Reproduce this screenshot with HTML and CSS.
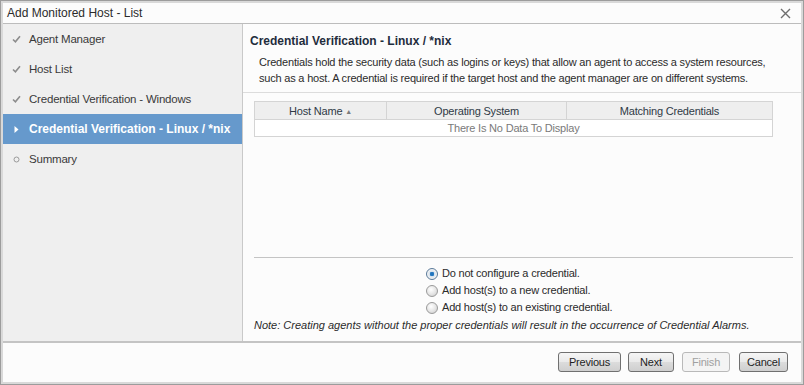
FILE: index.html
```html
<!DOCTYPE html>
<html>
<head>
  <title>Add Monitored Host - List</title>
  <link rel="stylesheet" href="styles.css">
</head>
<body>
  <div class="dialog">
    <div class="title-bar">
      <span class="title">Add Monitored Host - List</span>
      <svg class="close" width="11" height="11" viewBox="0 0 11 11">
        <path d="M1 1 L10 10 M10 1 L1 10" stroke="#6e6e6e" stroke-width="1.4" fill="none"/>
      </svg>
    </div>

    <div class="main">
      <div class="steps">
        <div class="step done">
          <svg class="step-icon" width="9" height="8" viewBox="0 0 9 8"><path d="M1 4.5 L3.4 6.8 L8 1.2" stroke="#8c8c8c" stroke-width="1.6" fill="none"/></svg>
          <span>Agent Manager</span>
        </div>
        <div class="step done">
          <svg class="step-icon" width="9" height="8" viewBox="0 0 9 8"><path d="M1 4.5 L3.4 6.8 L8 1.2" stroke="#8c8c8c" stroke-width="1.6" fill="none"/></svg>
          <span>Host List</span>
        </div>
        <div class="step done">
          <svg class="step-icon" width="9" height="8" viewBox="0 0 9 8"><path d="M1 4.5 L3.4 6.8 L8 1.2" stroke="#8c8c8c" stroke-width="1.6" fill="none"/></svg>
          <span>Credential Verification - Windows</span>
        </div>
        <div class="step active">
          <svg class="step-icon" width="9" height="9" viewBox="0 0 9 9"><path d="M2.5 1 L6.5 4.5 L2.5 8 Z" fill="#ffffff"/></svg>
          <span>Credential Verification - Linux / *nix</span>
        </div>
        <div class="step">
          <svg class="step-icon" width="9" height="9" viewBox="0 0 9 9"><circle cx="4.5" cy="4.5" r="2.5" stroke="#9a9a9a" stroke-width="1" fill="none"/></svg>
          <span>Summary</span>
        </div>
      </div>

      <div class="content">
        <div class="content-head">
          <h2>Credential Verification - Linux / *nix</h2>
          <p>Credentials hold the security data (such as logins or keys) that allow an agent to access a system resources, such as a host. A credential is required if the target host and the agent manager are on different systems.</p>
        </div>

        <div class="content-body">
          <table class="grid">
            <thead>
              <tr>
                <th class="col-host">Host Name <span class="sort">&#9650;</span></th>
                <th class="col-os">Operating System</th>
                <th>Matching Credentials</th>
              </tr>
            </thead>
            <tbody>
              <tr>
                <td colspan="3" class="empty">There Is No Data To Display</td>
              </tr>
            </tbody>
          </table>

          <div class="options">
            <label class="radio"><span class="dot checked"></span>Do not configure a credential.</label>
            <label class="radio"><span class="dot"></span>Add host(s) to a new credential.</label>
            <label class="radio"><span class="dot"></span>Add host(s) to an existing credential.</label>
          </div>

          <div class="note">Note: Creating agents without the proper credentials will result in the occurrence of Credential Alarms.</div>
        </div>
      </div>
    </div>

    <div class="footer">
      <button class="btn btn-prev">Previous</button>
      <button class="btn btn-next">Next</button>
      <button class="btn btn-finish" disabled>Finish</button>
      <button class="btn btn-cancel">Cancel</button>
    </div>
  </div>
</body>
</html>
```

FILE: styles.css
```css
* {
  margin: 0;
  padding: 0;
  box-sizing: border-box;
}

body {
  font-family: Tahoma, "Liberation Sans", Arial, sans-serif;
  font-size: 11px;
  letter-spacing: -0.2px;
  color: #2b2b2b;
  background: #e6e6e6;
}

.dialog {
  width: 804px;
  height: 385px;
  border: 1px solid #9c9c9c;
  padding: 2px;
  background: #d9d9d9;
  display: flex;
  flex-direction: column;
}

.title-bar {
  height: 21px;
  background: #fcfcfc;
  border-bottom: 1px solid #bcbcbc;
  display: flex;
  align-items: center;
  justify-content: space-between;
  padding: 0 10px 0 4px;
}

.title {
  font-size: 12px;
  letter-spacing: 0;
  color: #2b2b2b;
}

.main {
  height: 319px;
  display: flex;
  background: #fcfcfc;
  border-bottom: 2px solid #c4c4c4;
}

.steps {
  width: 240px;
  background: #efefef;
  border-right: 1px solid #c9c9c9;
}

.step {
  height: 30px;
  display: flex;
  align-items: center;
  padding-left: 9px;
  font-size: 11.5px;
  color: #3a3a3a;
}

.step-icon {
  width: 9px;
  margin-right: 8px;
}

.step.active {
  background: #6699cc;
  color: #ffffff;
  font-weight: bold;
  font-size: 12px;
  letter-spacing: 0;
}

.content {
  flex: 1;
  display: flex;
  flex-direction: column;
}

.content-head {
  border-bottom: 1px solid #dcdcdc;
  padding: 10px 14px 6px 7px;
}

.content-head h2 {
  font-size: 12px;
  line-height: 14px;
  letter-spacing: 0;
  font-weight: bold;
  color: #1f2d3d;
  margin-bottom: 6px;
}

.content-head p {
  line-height: 16px;
  padding-left: 9px;
  color: #2b2b2b;
}

.content-body {
  flex: 1;
  padding: 8px 8px 8px 11px;
  display: flex;
  flex-direction: column;
}

.grid {
  width: 519px;
  border-collapse: collapse;
  border: 1px solid #d4d4d4;
  font-size: 11px;
}

.grid th {
  background: #eeeeee;
  font-weight: normal;
  height: 18px;
  border-right: 1px solid #d4d4d4;
  border-bottom: 1px solid #d4d4d4;
  color: #2f3a46;
}

.col-host {
  width: 132px;
}

.col-os {
  width: 180px;
}

.sort {
  font-size: 7px;
  color: #7a7a7a;
  vertical-align: 1px;
}

.grid td.empty {
  height: 17px;
  text-align: center;
  color: #7a7a7a;
  background: #ffffff;
}

.options {
  margin-top: auto;
  border-top: 1px solid #c4c4c4;
  padding: 8px 0 0 172px;
  display: flex;
  flex-direction: column;
  gap: 3px;
}

.radio {
  display: flex;
  align-items: center;
  height: 14px;
  color: #2b2b2b;
}

.dot {
  width: 12px;
  height: 12px;
  border-radius: 50%;
  border: 1px solid #9a9a9a;
  background: radial-gradient(circle at 40% 35%, #ffffff 0%, #e4e4e4 55%, #c8c8c8 100%);
  margin-right: 4px;
  position: relative;
  top: 1px;
}

.dot.checked {
  border-color: #5a7a9a;
  background: radial-gradient(circle at 50% 50%, #1e6fb8 0%, #2a7cc4 28%, #d7e3ee 36%, #f4f4f4 70%, #cfcfcf 100%);
}

.note {
  margin-top: 5px;
  height: 14px;
  font-style: italic;
  letter-spacing: 0;
  color: #2b2b2b;
}

.footer {
  flex: 1;
  background: #fcfcfc;
  display: flex;
  justify-content: flex-end;
  align-items: flex-start;
  padding: 9px 13px 0 0;
}

.btn {
  height: 20px;
  font-family: inherit;
  font-size: 11px;
  letter-spacing: -0.2px;
  color: #1e1e1e;
  border: 1px solid #707070;
  border-radius: 3px;
  background: linear-gradient(#f6f6f6 0%, #e9e9e9 50%, #dcdcdc 51%, #cfcfcf 100%);
}

.btn-prev {
  width: 63px;
}

.btn-next {
  width: 46px;
  margin-left: 7px;
}

.btn-finish {
  width: 48px;
  margin-left: 8px;
}

.btn-cancel {
  width: 49px;
  margin-left: 9px;
}

.btn:disabled {
  color: #a0a0a0;
  border-color: #b9b9b9;
  background: #f4f4f4;
}
```
